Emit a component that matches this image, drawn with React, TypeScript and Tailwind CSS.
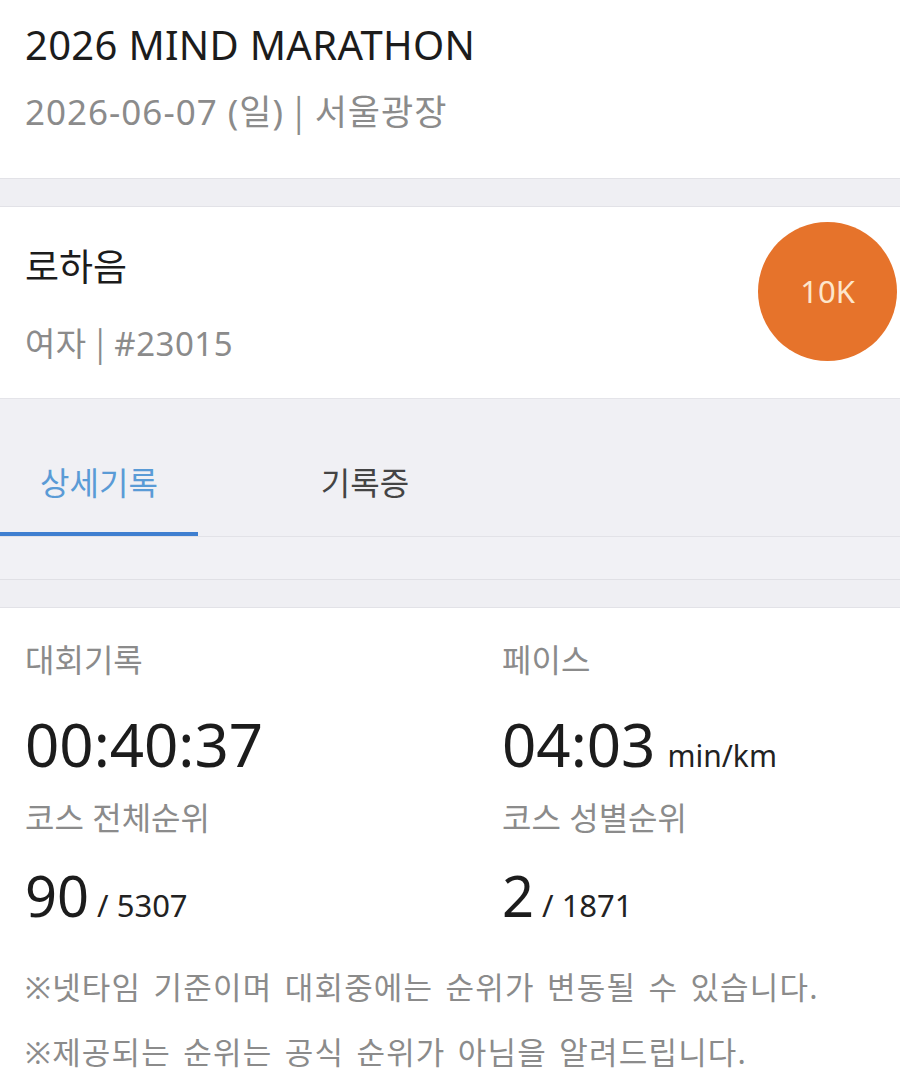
import React from "react";

const F = { fontFamily: '"Noto Sans", "Noto Sans CJK KR", sans-serif' };
const CJK = { fontFamily: '"Noto Sans CJK KR", sans-serif' };

export default function App() {
  return (
    <div className="w-[900px] h-[1092px] overflow-hidden bg-white" style={F}>
      {/* header */}
      <div className="h-[178px] bg-white pl-[25px] pt-[21px]">
        <div className="text-[40px] leading-[48px] tracking-[0.3px] text-[#1c1c1c]">2026 MIND MARATHON</div>
        <div className="mt-[21px] text-[35px] leading-[40px] tracking-[1px] text-[#8b8b8b]">
          2026-06-07 (일) <span style={CJK}>|</span> 서울광장
        </div>
      </div>
      <div className="h-[29px] bg-[#efeff3] border-y border-[#e2e2e7]" />
      {/* runner card */}
      <div className="h-[191px] bg-white flex items-start justify-between pl-[25px] pr-[3px]">
        <div className="flex flex-col pt-[38px]">
          <div className="text-[37px] leading-[44px] text-[#1c1c1c]">로하음</div>
          <div className="mt-[33px] text-[33px] leading-[40px] tracking-[0.5px] text-[#8b8b8b]">
            여자 <span style={CJK}>|</span> #23015
          </div>
        </div>
        <div className="mt-[15px] w-[139px] h-[139px] rounded-full bg-[#e6732b] flex items-center justify-center">
          <span className="text-[31px] leading-none text-[#fde6cc]">10K</span>
        </div>
      </div>
      {/* tabs */}
      <div className="bg-[#f0f0f4] border-t border-[#e4e4e9]">
        <div className="h-[138px] flex items-end border-b border-[#e2e2e7]">
          <div className="w-[198px] h-full flex flex-col">
            <div className="flex-1 flex items-center justify-center pt-[34px] text-[32px] text-[#5a9bd6]">상세기록</div>
            <div className="h-[4px] bg-[#3f7fd0]" />
          </div>
          <div className="w-[334px] h-full flex items-center justify-center pt-[30px] text-[32px] text-[#444]">기록증</div>
        </div>
        <div className="h-[43px] bg-[#f1f1f5] border-b border-[#e0e0e5]" />
        <div className="h-[28px] bg-[#efeff3] border-b border-[#e2e2e7]" />
      </div>
      {/* stats */}
      <div className="bg-white pl-[25px] pt-[32px]">
        <div className="grid grid-cols-[477px_1fr]">
          <div className="text-[32px] leading-[40px] text-[#8b8b8b]">대회기록</div>
          <div className="text-[32px] leading-[40px] text-[#8b8b8b]">페이스</div>
          <div className="mt-[29px] text-[60px] leading-[70px] text-[#1c1c1c]">00:40:37</div>
          <div className="mt-[29px] text-[60px] leading-[70px] text-[#1c1c1c]">
            04:03<span className="ml-[12px] text-[30px] text-[#222]">min/km</span>
          </div>
          <div className="mt-[7px] text-[32px] leading-[40px] text-[#8b8b8b]">코스 전체순위</div>
          <div className="mt-[7px] text-[32px] leading-[40px] text-[#8b8b8b]">코스 성별순위</div>
          <div className="mt-[25px] text-[56px] leading-[64px] text-[#1c1c1c]">
            90<span className="ml-[8px] text-[31px] text-[#222]">/ 5307</span>
          </div>
          <div className="mt-[25px] text-[56px] leading-[64px] text-[#1c1c1c]">
            2<span className="ml-[8px] text-[31px] text-[#222]">/ 1871</span>
          </div>
        </div>
        <div className="mt-[30px] text-[31px] leading-[40px] tracking-[1.2px] [word-spacing:3px] text-[#8b8b8b]">※넷타임 기준이며 대회중에는 순위가 변동될 수 있습니다.</div>
        <div className="mt-[25px] text-[31px] leading-[40px] tracking-[1.2px] [word-spacing:3px] text-[#8b8b8b]">※제공되는 순위는 공식 순위가 아님을 알려드립니다.</div>
      </div>
    </div>
  );
}
